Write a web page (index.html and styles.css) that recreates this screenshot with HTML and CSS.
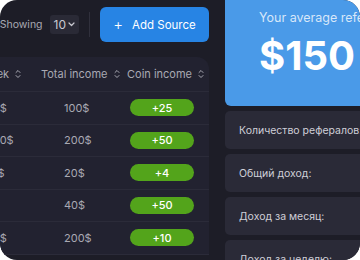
FILE: index.html
```html
<!DOCTYPE html>
<html lang="en">
<head>
  <meta charset="UTF-8">
  <meta name="viewport" content="width=device-width, initial-scale=1.0">
  <title>Referral Sources</title>
  <link rel="stylesheet" href="styles.css">
</head>
<body>
  <div class="frame">
    <div class="layout">
      <section class="main">
        <div class="toolbar">
          <span class="label">Showing</span>
          <div class="select">10
            <svg width="7" height="5" viewBox="0 0 7 5"><path d="M1 1l2.5 2.5L6 1" fill="none" stroke="currentColor" stroke-width="1.2" stroke-linecap="round" stroke-linejoin="round"/></svg>
          </div>
          <span class="divider"></span>
          <button class="btn-add"><span class="plus">+</span>Add Source</button>
        </div>

        <div class="table-card">
          <div class="row head">
            <div class="cell">Week <svg class="sort" width="6" height="10" viewBox="0 0 6 10"><path d="M1 3.5L3 1.5l2 2M1 6.5l2 2 2-2" fill="none" stroke="currentColor" stroke-width="1" stroke-linecap="round" stroke-linejoin="round"/></svg></div>
            <div class="cell">Total income <svg class="sort" width="6" height="10" viewBox="0 0 6 10"><path d="M1 3.5L3 1.5l2 2M1 6.5l2 2 2-2" fill="none" stroke="currentColor" stroke-width="1" stroke-linecap="round" stroke-linejoin="round"/></svg></div>
            <div class="cell">Coin income <svg class="sort" width="6" height="10" viewBox="0 0 6 10"><path d="M1 3.5L3 1.5l2 2M1 6.5l2 2 2-2" fill="none" stroke="currentColor" stroke-width="1" stroke-linecap="round" stroke-linejoin="round"/></svg></div>
          </div>
          <div class="row">
            <div class="cell week">50$</div>
            <div class="cell total">100$</div>
            <div class="cell"><span class="badge">+25</span></div>
          </div>
          <div class="row">
            <div class="cell week">200$</div>
            <div class="cell total">200$</div>
            <div class="cell"><span class="badge">+50</span></div>
          </div>
          <div class="row">
            <div class="cell week">10$</div>
            <div class="cell total">20$</div>
            <div class="cell"><span class="badge">+4</span></div>
          </div>
          <div class="row">
            <div class="cell week">5$</div>
            <div class="cell total">40$</div>
            <div class="cell"><span class="badge">+50</span></div>
          </div>
          <div class="row">
            <div class="cell week">20$</div>
            <div class="cell total">200$</div>
            <div class="cell"><span class="badge">+10</span></div>
          </div>
        </div>
      </section>

      <aside class="side">
        <div class="avg-card">
          <p class="avg-title">Your average referral income</p>
          <p class="avg-value">$150</p>
        </div>
        <div class="stat">Количество рефералов:</div>
        <div class="stat">Общий доход:</div>
        <div class="stat">Доход за месяц:</div>
        <div class="stat">Доход за неделю:</div>
      </aside>
    </div>
  </div>
</body>
</html>
```

FILE: styles.css
```css
body {
  margin: 0;
  background: #ffffff;
  font-family: Inter, "Noto Sans", sans-serif;
}
.frame {
  width: 360px;
  height: 260px;
  border-radius: 17px;
  overflow: hidden;
  background: #1d1d27;
}
.layout {
  display: flex;
  gap: 16px;
  margin-left: -40px;
}
.main {
  width: 249px;
  flex: none;
}
.toolbar {
  display: flex;
  align-items: center;
  justify-content: flex-end;
  height: 35px;
  padding-top: 7px;
  margin-bottom: 15px;
}
.label {
  font-size: 10.5px;
  color: #a9a9b3;
  margin-right: 7px;
}
.select {
  display: flex;
  align-items: center;
  gap: 2px;
  height: 19px;
  padding: 0 4px;
  border-radius: 3px;
  background: #2a2a36;
  color: #c9c9d1;
  font-size: 12px;
}
.divider {
  width: 1px;
  height: 25px;
  margin: 0 10px;
  background: #30303c;
}
.btn-add {
  width: 109px;
  height: 35px;
  border: none;
  border-radius: 6px;
  background: #2784e4;
  color: #ffffff;
  font-family: inherit;
  font-size: 11.5px;
  display: flex;
  align-items: center;
  justify-content: center;
  padding: 0;
}
.plus {
  font-size: 15px;
  margin-right: 9px;
  font-weight: 300;
}
.table-card {
  background: #222230;
  border-radius: 0 12px 0 0;
}
.row {
  display: grid;
  grid-template-columns: 61px 86px 82px;
  padding-left: 20px;
  height: 32.5px;
  align-items: center;
  border-bottom: 1px solid #2b2b39;
  box-sizing: border-box;
  font-size: 11px;
  color: #a9a9b3;
}
.row.head {
  height: 35px;
}
.cell {
  display: flex;
  align-items: center;
}
.sort {
  margin-left: 6px;
}
.week {
  padding-left: 6px;
}
.total {
  padding-left: 23px;
}
.badge {
  margin-left: 3px;
  width: 64px;
  height: 17px;
  border-radius: 9px;
  background: #53a41b;
  color: #ffffff;
  font-size: 11px;
  font-weight: 500;
  display: flex;
  align-items: center;
  justify-content: center;
}
.side {
  width: 200px;
  flex: none;
  margin-top: -10px;
  display: flex;
  flex-direction: column;
  gap: 5px;
}
.avg-card {
  background: #4a9ae8;
  border-radius: 6px;
  padding: 20px 0 30px 34px;
  white-space: nowrap;
}
.avg-title {
  margin: 0;
  font-size: 12.5px;
  line-height: 16px;
  color: rgba(255, 255, 255, 0.78);
}
.avg-value {
  margin: 10px 0 0;
  font-size: 40px;
  line-height: 40px;
  font-weight: 700;
  color: #ffffff;
}
.stat {
  height: 38px;
  display: flex;
  align-items: center;
  padding-left: 14px;
  border-radius: 5px;
  background: #2a2a37;
  color: #cfcfd7;
  font-size: 10.5px;
  white-space: nowrap;
}
```
